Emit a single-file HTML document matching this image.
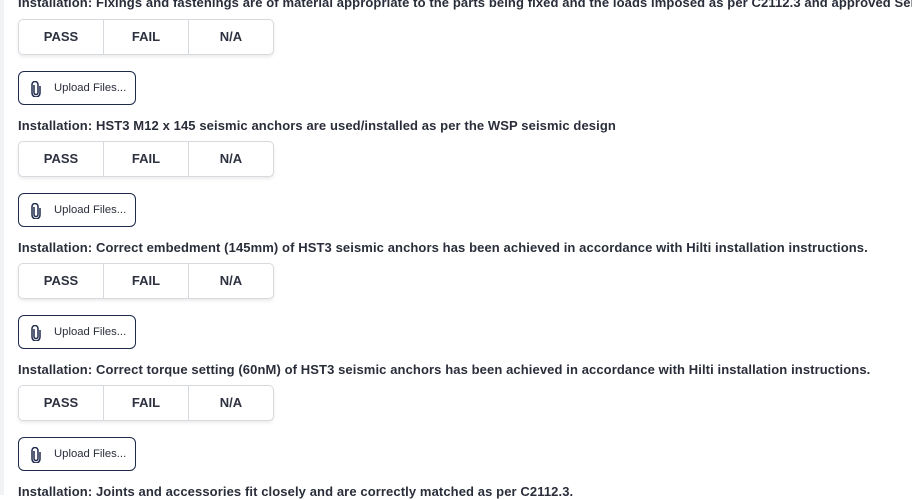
<!DOCTYPE html>
<html><head><style>
body{margin:0;width:912px;height:495px;overflow:hidden;background:#fff;font-family:"Liberation Sans",sans-serif;color:#1f2330;position:relative}
.strip{position:absolute;left:0;top:0;width:4px;height:495px;background:#f1f2f4}
.lbl{position:absolute;left:18px;font-size:13px;font-weight:bold;white-space:nowrap;letter-spacing:0.1px;color:#2a2e3a}
.grp{position:absolute;left:18px;width:254px;height:34px;border:1px solid #d6d9de;border-radius:5px;display:flex;box-shadow:0 2px 3px rgba(0,0,0,.08);background:#fff}
.grp div{width:85px;text-align:center;line-height:34px;font-size:13px;font-weight:bold;color:#2e3240;border-right:1px solid #d6d9de}
.grp div:last-child{border-right:none}
.up{position:absolute;left:18px;width:116px;height:32px;border:1px solid #1e2a4a;border-radius:6px;font-size:11.3px;color:#2a2e3a;line-height:32px;box-sizing:content-box}
.up span{position:absolute;left:35px}
.up svg{position:absolute;left:12px;top:9px}
</style></head><body>
<div class="strip"></div>
<div class="lbl" style="top:-5px">Installation: Fixings and fastenings are of material appropriate to the parts being fixed and the loads imposed as per C2112.3 and approved Seismic</div>
<div class="grp" style="top:19px"><div>PASS</div><div>FAIL</div><div>N/A</div></div>
<div class="up" style="top:71px"><svg width="10" height="16" viewBox="0 0 10 16"><path d="M3 4v7.5a2 2 0 0 0 4 0V3.5a3 3 0 0 0-6 0V12a4 4 0 0 0 8 0V5" fill="none" stroke="#1e2a4a" stroke-width="1.5"/></svg><span>Upload Files...</span></div>
<div class="lbl" style="top:118px">Installation: HST3 M12 x 145 seismic anchors are used/installed as per the WSP seismic design</div>
<div class="grp" style="top:141px"><div>PASS</div><div>FAIL</div><div>N/A</div></div>
<div class="up" style="top:193px"><svg width="10" height="16" viewBox="0 0 10 16"><path d="M3 4v7.5a2 2 0 0 0 4 0V3.5a3 3 0 0 0-6 0V12a4 4 0 0 0 8 0V5" fill="none" stroke="#1e2a4a" stroke-width="1.5"/></svg><span>Upload Files...</span></div>
<div class="lbl" style="top:240px">Installation: Correct embedment (145mm) of HST3 seismic anchors has been achieved in accordance with Hilti installation instructions.</div>
<div class="grp" style="top:263px"><div>PASS</div><div>FAIL</div><div>N/A</div></div>
<div class="up" style="top:315px"><svg width="10" height="16" viewBox="0 0 10 16"><path d="M3 4v7.5a2 2 0 0 0 4 0V3.5a3 3 0 0 0-6 0V12a4 4 0 0 0 8 0V5" fill="none" stroke="#1e2a4a" stroke-width="1.5"/></svg><span>Upload Files...</span></div>
<div class="lbl" style="top:362px">Installation: Correct torque setting (60nM) of HST3 seismic anchors has been achieved in accordance with Hilti installation instructions.</div>
<div class="grp" style="top:385px"><div>PASS</div><div>FAIL</div><div>N/A</div></div>
<div class="up" style="top:437px"><svg width="10" height="16" viewBox="0 0 10 16"><path d="M3 4v7.5a2 2 0 0 0 4 0V3.5a3 3 0 0 0-6 0V12a4 4 0 0 0 8 0V5" fill="none" stroke="#1e2a4a" stroke-width="1.5"/></svg><span>Upload Files...</span></div>
<div class="lbl" style="top:484px">Installation: Joints and accessories fit closely and are correctly matched as per C2112.3.</div>
</body></html>
